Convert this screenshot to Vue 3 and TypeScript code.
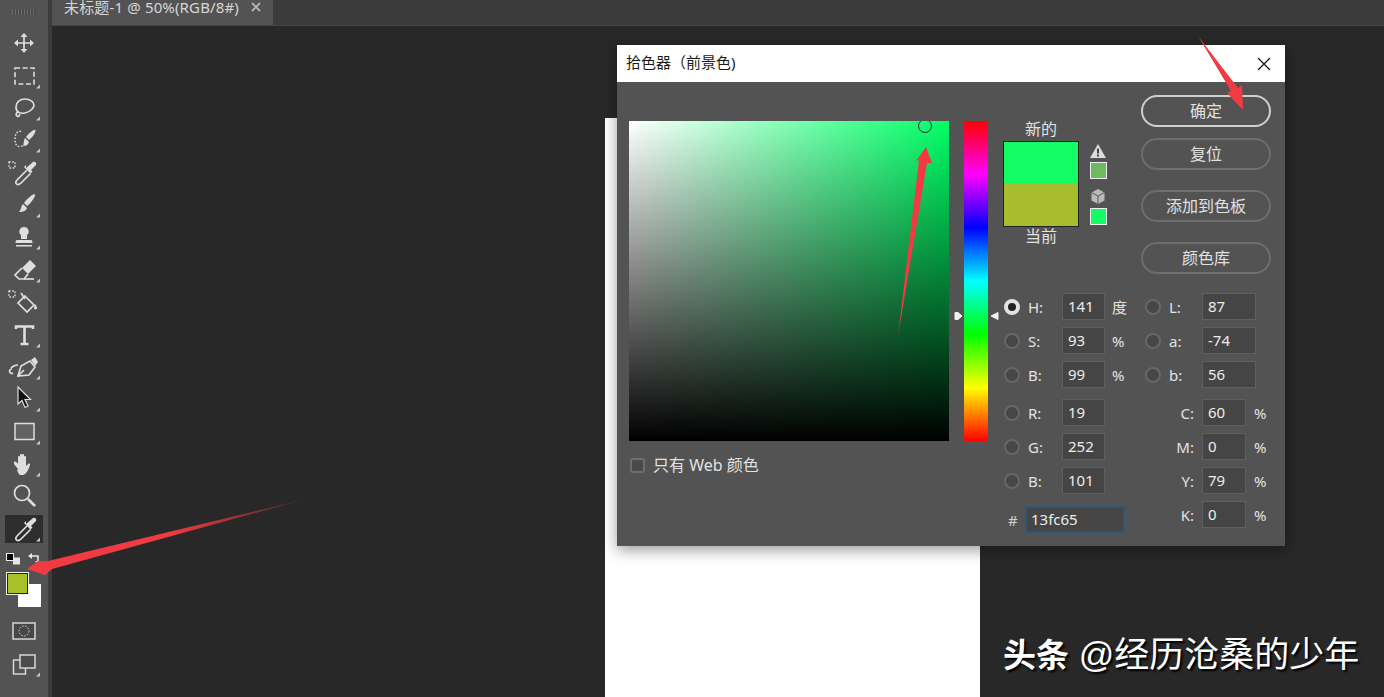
<template>
  <div class="app">
    <aside class="toolbar">
      <div class="grip"></div>
      <div
        v-for="tool in tools"
        :key="tool.name"
        class="tool"
        :class="{ 'tool--active': tool.active }"
      >
        <svg width="32" height="28" viewBox="0 0 32 28">
          <path
            v-for="(p, i) in tool.paths"
            :key="i"
            :d="p.d"
            :class="p.kind"
          />
          <path v-if="tool.more" d="M32 22.5V26.5H28z" class="more" />
        </svg>
      </div>

      <div class="color-tools">
        <svg class="defaults" width="34" height="14" viewBox="0 0 34 14">
          <rect x="8" y="5.5" width="7" height="7" fill="#e6e6e6" />
          <rect x="1.5" y="1.5" width="7" height="7" fill="#000" stroke="#eee" />
          <path d="M25 4h8v7" fill="none" stroke="#e6e6e6" stroke-width="1.6" />
          <path d="M27 1v6l-4-3zM30 9h6l-3 4z" fill="#e6e6e6" />
        </svg>
        <div class="swatches">
          <div class="swatch swatch--bg"></div>
          <div class="swatch swatch--fg"></div>
        </div>
      </div>

      <svg class="bottom-icon bottom-icon--mask" width="24" height="18" viewBox="0 0 24 18">
        <rect x="1" y="1" width="22" height="16" fill="#474747" stroke="#e0e0e0" stroke-width="1.4" />
        <circle cx="12" cy="9" r="5" fill="none" stroke="#ddd" stroke-dasharray="1.5 1.5" />
      </svg>
      <svg class="bottom-icon bottom-icon--screen" width="32" height="24" viewBox="0 0 32 24">
        <rect x="5.5" y="6" width="12" height="14" fill="none" stroke="#e0e0e0" stroke-width="1.4" />
        <rect x="12" y="1" width="15" height="13" fill="#4c4c4c" stroke="#e0e0e0" stroke-width="1.4" />
        <path d="M32 18.5V22.5H28z" class="more" />
      </svg>
    </aside>

    <main class="main">
      <div class="tabbar">
        <div class="tab">
          <span class="tab__title">未标题-1 @ 50%(RGB/8#)</span>
          <svg width="10" height="10" viewBox="0 0 10 10" class="tab__close">
            <path d="M1 1l8 8M9 1l-8 8" stroke="#b4b4b4" stroke-width="1.8" />
          </svg>
        </div>
      </div>

      <div class="canvas">
        <div class="doc"></div>

        <section class="dialog">
          <header class="dialog__title">
            <span class="dialog__name">拾色器（前景色)</span>
            <svg width="14" height="14" viewBox="0 0 14 14">
              <path d="M1 1l12 12M13 1L1 13" stroke="#111" stroke-width="1.2" />
            </svg>
          </header>

          <div class="dialog__body">
            <div class="picker-col">
              <div class="field">
                <span class="field__marker"></span>
              </div>
              <label class="web-only">
                <span class="web-only__box"></span>
                <span>只有 Web 颜色</span>
              </label>
            </div>

            <div class="hue-wrap">
              <div class="hue"></div>
              <svg class="hue-handle hue-handle--left" width="9" height="10" viewBox="0 0 9 10">
                <path d="M1 1.500h3L8 5 4 8.500H1z" fill="#f0f0f0" stroke="#f0f0f0" />
              </svg>
              <svg class="hue-handle hue-handle--right" width="9" height="10" viewBox="0 0 9 10">
                <path d="M8 1.500L1 5l7 3.500z" fill="#f0f0f0" stroke="#f0f0f0" />
              </svg>
            </div>

            <div class="side">
              <div class="side__top">
                <div class="preview">
                  <div class="preview__label">新的</div>
                  <div class="preview__row">
                    <div class="preview__box">
                      <div class="preview__new"></div>
                      <div class="preview__cur"></div>
                    </div>
                    <div class="gamut">
                      <svg width="18" height="16" viewBox="0 0 18 16">
                        <path d="M9 1l8 14H1z" fill="#dcdcdc" />
                        <path d="M8 5.500h2v5H8zM8 11.500h2v2H8z" fill="#444" />
                      </svg>
                      <div class="gamut__chip gamut__chip--warn"></div>
                      <svg class="gamut__cube" width="16" height="17" viewBox="0 0 16 17">
                        <path d="M8 1l6.500 3.500v8L8 16l-6.500-3.500v-8z" fill="#b9b9b9" />
                        <path d="M1.500 4.500L8 8l6.500-3.500M8 8v8" fill="none" stroke="#555" />
                      </svg>
                      <div class="gamut__chip gamut__chip--web"></div>
                    </div>
                  </div>
                  <div class="preview__label preview__label--cur">当前</div>
                </div>

                <div class="actions">
                  <button type="button" class="btn btn--primary">确定</button>
                  <button type="button" class="btn btn--reset">复位</button>
                  <button type="button" class="btn btn--swatch">添加到色板</button>
                  <button type="button" class="btn btn--library">颜色库</button>
                </div>
              </div>

              <div class="form">
                <div class="form__col">
                  <div
                    v-for="row in leftRows"
                    :key="row.id"
                    class="row"
                    :class="{ 'row--gap': row.id === 'R' }"
                  >
                    <span class="radio" :class="{ 'radio--on': row.on }"></span>
                    <span class="row__label">{{ row.label }}:</span>
                    <span class="num num--left">{{ row.value }}</span>
                    <span class="row__unit">{{ row.unit }}</span>
                  </div>
                  <div class="row row--hex">
                    <span class="row__hash">#</span>
                    <span class="num num--hex">13fc65</span>
                  </div>
                </div>

                <div class="form__col form__col--right">
                  <div v-for="row in labRows" :key="row.label" class="row">
                    <span class="radio radio--lab"></span>
                    <span class="row__label">{{ row.label }}:</span>
                    <span class="num num--lab">{{ row.value }}</span>
                  </div>
                  <div
                    v-for="row in cmykRows"
                    :key="row.label"
                    class="row"
                    :class="{ 'row--gap': row.label === 'C' }"
                  >
                    <span class="row__label row__label--cmyk">{{ row.label }}:</span>
                    <span class="num num--cmyk">{{ row.value }}</span>
                    <span class="row__unit row__unit--cmyk">%</span>
                  </div>
                </div>
              </div>
            </div>
          </div>
        </section>

        <div class="watermark"><b>头条</b> @经历沧桑的少年</div>
      </div>
    </main>

    <svg class="arrows" width="1384" height="697" viewBox="0 0 1384 697">
      <defs>
        <linearGradient id="tailA" gradientUnits="userSpaceOnUse" x1="310" y1="498" x2="170" y2="535">
          <stop offset="0" stop-color="#f23a42" stop-opacity="0.1" />
          <stop offset="1" stop-color="#f23a42" />
        </linearGradient>
      </defs>
      <path d="M310 498L48 561H38L27 569l18 6 7-6z" fill="url(#tailA)" />
      <path d="M1198 36l33 55-4 2 16 17-1-25-4 3z" fill="#f23a42" />
      <path d="M898 336l21-176-3 1 10-14 6 16h-5z" fill="#f23a42" />
    </svg>
  </div>
</template>

<script setup lang="ts">
interface IconPath {
  d: string
  kind: 'fill' | 'line' | 'thick' | 'dash' | 'dots' | 'black' | 'box'
}

interface Tool {
  name: string
  paths: IconPath[]
  more?: boolean
  active?: boolean
}

const dropper: IconPath[] = [
  { d: 'M18 9l7-6c2-1 4 1 3 3l-5 5 1.500 1.500-2 2L16 8l2-2z', kind: 'fill' },
  { d: 'M19 11l-9.500 9.500c-1.500 1.500-2 3.500-1 4.500s3 .5 4.500-1l9.500-9.500', kind: 'line' },
]

const checker: IconPath = { d: 'M1 3h6v6H1z', kind: 'dots' }

const tools: Tool[] = [
  {
    name: 'move',
    paths: [
      { d: 'M16 7v14M9 14h14', kind: 'line' },
      { d: 'M16 4l-3.500 4h7zM16 24l-3.500-4h7zM6 14l4-3.500v7zM26 14l-4-3.500v7z', kind: 'fill' },
    ],
  },
  {
    name: 'marquee',
    more: true,
    paths: [{ d: 'M7 6h19v16H7z', kind: 'dash' }],
  },
  {
    name: 'lasso',
    more: true,
    paths: [
      { d: 'M8 13c0-5 4-8 9-8s9 3 9 6-4 7-9 8c-4 .8-9 0-9-6z', kind: 'line' },
      { d: 'M10 18c-2 1-2.500 3-1 4s3 0 2.500-2', kind: 'line' },
    ],
  },
  {
    name: 'quick-select',
    more: true,
    paths: [
      { d: 'M13 5.500c-3-1-6 2-6 7s1 8 5 8c2 0 3-1 3.500-2', kind: 'dots' },
      { d: 'M27 3l.5 2c-1 4-4 7-6.500 9l-3-3c2-3 6-6.500 9.500-8z', kind: 'fill' },
      { d: 'M17 12l4 4c-1 3-3 4-6 4 1-2 .5-6 2-8z', kind: 'fill' },
    ],
  },
  {
    name: 'eyedropper-sample',
    paths: [checker, ...dropper],
  },
  {
    name: 'brush',
    more: true,
    paths: [
      { d: 'M26 3c1 0 1 1 1 2-2 4-5 8-8 10l-3-3c2-3 6-7 10-9z', kind: 'fill' },
      { d: 'M15 13l4 4c-1 3-4 4-8 4 2-2 2-6 4-8z', kind: 'fill' },
    ],
  },
  {
    name: 'stamp',
    more: true,
    paths: [
      { d: 'M16 4a4.500 4.500 0 0 1 3 8v4h-6v-4a4.500 4.500 0 0 1 3-8z', kind: 'fill' },
      { d: 'M9 17h14c1 0 1.500 1 1.500 3h-17c0-2 .5-3 1.500-3zM8 22h16v1.500H8z', kind: 'fill' },
    ],
  },
  {
    name: 'eraser',
    more: true,
    paths: [
      { d: 'M22 4l6 6-8 8-6-6z', kind: 'fill' },
      { d: 'M14 12l-7 7 4 4h5l4-5', kind: 'line' },
      { d: 'M16 23h10', kind: 'line' },
    ],
  },
  {
    name: 'bucket',
    paths: [
      checker,
      { d: 'M17 8l9 9-7 7-9-9z', kind: 'line' },
      { d: 'M13 5l4 6', kind: 'line' },
      { d: 'M27 16c1.500 2 3 4 1.500 5s-2.500 0-2.500-1z', kind: 'fill' },
    ],
  },
  {
    name: 'type',
    more: true,
    paths: [{ d: 'M8 8V5.500h17V8M16.500 6v17M12.500 23h8', kind: 'thick' }],
  },
  {
    name: 'pen',
    more: true,
    paths: [
      { d: 'M10 23l3-10 9-5 5 6-6 8z', kind: 'line' },
      { d: 'M23 7l4-3 3 5-3 4z', kind: 'fill' },
      { d: 'M10 23l6-6', kind: 'line' },
      { d: 'M3 15c2-2 4-3 7-3M4 16a2.200 2.200 0 1 0 1 4', kind: 'line' },
    ],
  },
  {
    name: 'path-select',
    more: true,
    paths: [{ d: 'M10 2v17l4-3.500 3 7 3-1.500-3-6.500h5.500z', kind: 'black' }],
  },
  {
    name: 'shape',
    more: true,
    paths: [{ d: 'M7 5.500h19v16H7z', kind: 'box' }],
  },
  {
    name: 'hand',
    more: true,
    paths: [
      {
        d: 'M10 19c-2-3-5-5-4-7 1-1 3 0 4 2V7c0-1.500 2-1.500 2 0v4-6c0-1.500 2-1.500 2 0v6-6c0-1.500 2-1.500 2 0v6-4c0-1.500 2-1.500 2 0v9l2-2c1-1 2.500 0 2 1-1 3-3 9-7 10h-3c-1 0-2-3-3-5z',
        kind: 'fill',
      },
    ],
  },
  {
    name: 'zoom',
    paths: [
      { d: 'M14 3.500a7.500 7.500 0 1 0 0 15 7.500 7.500 0 0 0 0-15z', kind: 'line' },
      { d: 'M20 17l7 7', kind: 'thick' },
    ],
  },
  {
    name: 'eyedropper',
    more: true,
    active: true,
    paths: dropper,
  },
]

const leftRows = [
  { id: 'H', label: 'H', value: '141', unit: '度', on: true },
  { id: 'S', label: 'S', value: '93', unit: '%' },
  { id: 'Br', label: 'B', value: '99', unit: '%' },
  { id: 'R', label: 'R', value: '19', unit: '' },
  { id: 'G', label: 'G', value: '252', unit: '' },
  { id: 'Bl', label: 'B', value: '101', unit: '' },
]

const labRows = [
  { label: 'L', value: '87' },
  { label: 'a', value: '-74' },
  { label: 'b', value: '56' },
]

const cmykRows = [
  { label: 'C', value: '60' },
  { label: 'M', value: '0' },
  { label: 'Y', value: '79' },
  { label: 'K', value: '0' },
]
</script>

<style>
html,
body {
  margin: 0;
  background: #282828;
  overflow: hidden;
}
</style>

<style scoped>
.app {
  position: relative;
  display: flex;
  width: 1384px;
  height: 697px;
  overflow: hidden;
  background: #282828;
  font-family: "Noto Sans", "Noto Sans CJK SC", sans-serif;
}

.toolbar {
  display: flex;
  flex-direction: column;
  align-items: center;
  box-sizing: border-box;
  width: 52px;
  flex: none;
  border-right: 4px solid #3c3c3c;
  background: #535353;
}

.grip {
  width: 24px;
  height: 6px;
  margin: 9px 0 12px;
  background: repeating-linear-gradient(to right, #6a6a6a 0 1px, #4a4a4a 1px 3px);
}

.tool {
  display: flex;
  align-items: center;
  justify-content: center;
  width: 38px;
  height: 28px;
  margin: 2.2px 0;
  flex: none;
}

.tool--active {
  background: #2d2d2d;
}

.fill {
  fill: #dedede;
}

.line {
  fill: none;
  stroke: #dedede;
  stroke-width: 1.7;
}

.thick {
  fill: none;
  stroke: #dedede;
  stroke-width: 2.6;
}

.dash {
  fill: none;
  stroke: #dedede;
  stroke-width: 1.6;
  stroke-dasharray: 5 2.6;
}

.dots {
  fill: none;
  stroke: #dedede;
  stroke-width: 1.4;
  stroke-dasharray: 1.6 1.6;
}

.black {
  fill: #111;
  stroke: #dedede;
  stroke-width: 1.2;
}

.box {
  fill: #626262;
  stroke: #dedede;
  stroke-width: 1.5;
}

.more {
  fill: #c8c8c8;
}

.color-tools {
  display: flex;
  flex-direction: column;
  width: 48px;
  margin-top: 7px;
}

.defaults {
  margin-left: 5px;
}

.swatches {
  position: relative;
  height: 40px;
  margin-top: 6px;
}

.swatch {
  position: absolute;
  box-sizing: border-box;
  width: 23px;
  height: 23px;
}

.swatch--fg {
  left: 6px;
  top: 0;
  background: #a8c127;
  border: 1px solid #f0f0f0;
  outline: 1px solid #222;
  outline-offset: -2px;
}

.swatch--bg {
  left: 18px;
  top: 12px;
  background: #fff;
}

.bottom-icon {
  flex: none;
}

.bottom-icon--mask {
  margin-top: 10px;
}

.bottom-icon--screen {
  margin-top: 14px;
}

.main {
  display: flex;
  flex-direction: column;
  flex: 1;
  min-width: 0;
}

.tabbar {
  height: 26px;
  flex: none;
  background: #3b3b3b;
  box-shadow: inset 0 -1px 0 #454545;
}

.tab {
  display: flex;
  align-items: flex-start;
  box-sizing: border-box;
  width: 221px;
  height: 25px;
  padding-left: 12px;
  overflow: hidden;
  background: #535353;
  color: #d6d6d6;
}

.tab__title {
  margin-top: -4px;
  font-size: 15px;
  line-height: 22px;
  letter-spacing: 0.15px;
  white-space: nowrap;
}

.tab__close {
  margin: 2px 0 0 12px;
}

.canvas {
  position: relative;
  flex: 1;
  background: #282828;
}

.doc {
  position: absolute;
  left: 553px;
  top: 92px;
  bottom: 0;
  width: 375px;
  background: #fff;
}

.dialog {
  position: absolute;
  left: 565px;
  top: 19px;
  display: flex;
  flex-direction: column;
  width: 668px;
  height: 501px;
  background: #535353;
  box-shadow: 0 4px 14px rgba(0, 0, 0, 0.4);
}

.dialog__title {
  display: flex;
  align-items: center;
  justify-content: space-between;
  box-sizing: border-box;
  height: 37px;
  flex: none;
  padding: 0 14px 0 9px;
  background: #fff;
  color: #1a1a1a;
  font-size: 15px;
}

.dialog__name {
  margin-top: -4px;
}

.dialog__body {
  display: flex;
  flex: 1;
  padding: 13px 14px 0 12px;
  color: #e2e2e2;
}

.picker-col {
  width: 320px;
  flex: none;
  padding-top: 26px;
}

.field {
  position: relative;
  width: 320px;
  height: 320px;
  overflow: hidden;
  background:
    linear-gradient(to top, #000, rgba(0, 0, 0, 0)),
    linear-gradient(to right, #fff, #00ff66);
}

.field__marker {
  position: absolute;
  left: 289px;
  top: -2px;
  box-sizing: border-box;
  width: 14px;
  height: 14px;
  border: 1px solid #123;
  border-radius: 50%;
}

.web-only {
  display: flex;
  align-items: center;
  gap: 8px;
  margin: 13px 0 0 1px;
  font-size: 16px;
  line-height: 22px;
}

.web-only__box {
  box-sizing: border-box;
  width: 15px;
  height: 15px;
  border: 2px solid #6e6e6e;
  border-radius: 3px;
  background: #4a4a4a;
}

.hue-wrap {
  position: relative;
  flex: none;
  width: 24px;
  height: 320px;
  margin: 26px 0 0 15px;
}

.hue {
  height: 100%;
  background: linear-gradient(
    to bottom,
    #ff0000,
    #ff00ff 16.67%,
    #0000ff 33.33%,
    #00ffff 50%,
    #00ff00 66.67%,
    #ffff00 83.33%,
    #ff0000
  );
}

.hue-handle {
  position: absolute;
  top: 190px;
}

.hue-handle--left {
  left: -10px;
}

.hue-handle--right {
  right: -11px;
}

.side {
  flex: none;
  width: 268px;
  margin-left: 15px;
}

.side__top {
  display: flex;
  justify-content: space-between;
  height: 198px;
}

.preview {
  width: 112px;
  padding-top: 23px;
}

.preview__label {
  width: 76px;
  font-size: 16px;
  line-height: 23px;
  text-align: center;
}

.preview__label--cur {
  line-height: 19px;
}

.preview__row {
  display: flex;
}

.preview__box {
  display: flex;
  flex-direction: column;
  box-sizing: border-box;
  width: 76px;
  height: 86px;
  border: 1px solid #222;
}

.preview__new {
  flex: 1;
  background: #13fc65;
}

.preview__cur {
  flex: 1;
  background: #a8bd2d;
}

.gamut {
  display: flex;
  flex-direction: column;
  align-items: center;
  width: 18px;
  margin-left: 10px;
  padding-top: 2px;
}

.gamut__chip {
  box-sizing: border-box;
  width: 17px;
  height: 17px;
  margin-top: 3px;
  border: 1px solid #f0f0f0;
}

.gamut__chip--warn {
  background: #6dbb5f;
}

.gamut__chip--web {
  background: #13fc65;
}

.gamut__cube {
  margin-top: 9px;
}

.actions {
  display: flex;
  flex-direction: column;
  width: 130px;
}

.btn {
  box-sizing: border-box;
  width: 130px;
  height: 32px;
  padding: 0 0 2px;
  border: 2px solid #6e6e6e;
  border-radius: 16px;
  background: #535353;
  color: #e2e2e2;
  font-family: "Noto Sans CJK SC", sans-serif;
  font-size: 16px;
  line-height: 1;
}

.btn--primary {
  border-color: #d0d0d0;
}

.btn--reset {
  margin-top: 11px;
}

.btn--swatch {
  margin-top: 20px;
}

.btn--library {
  margin-top: 20px;
}

.form {
  display: flex;
}

.form__col {
  width: 140px;
  flex: none;
}

.form__col--right {
  width: 128px;
}

.row {
  display: flex;
  align-items: center;
  height: 27px;
  margin-bottom: 7px;
  font-size: 15px;
}

.row--gap {
  margin-top: 11px;
}

.row--hex {
  margin-top: 12px;
  margin-bottom: 0;
}

.radio {
  box-sizing: border-box;
  flex: none;
  width: 16px;
  height: 16px;
  margin-left: 1px;
  border: 2px solid #676767;
  border-radius: 50%;
  background: #474747;
}

.radio--on {
  border: 4px solid #e2e2e2;
  background: #222;
}

.radio--lab {
  margin-left: 2px;
}

.row__label {
  width: 34px;
  margin-left: 8px;
  flex: none;
}

.form__col--right .row__label {
  width: 33px;
  margin-left: 8px;
}

.form__col--right .row__label--cmyk {
  box-sizing: border-box;
  width: 59px;
  margin-left: 0;
  padding-right: 8px;
  text-align: right;
}

.row__unit {
  margin-left: 7px;
}

.row__unit--cmyk {
  margin-left: 8px;
}

.row__hash {
  box-sizing: border-box;
  width: 22px;
  padding-left: 5px;
  color: #d0d0d0;
}

.num {
  box-sizing: border-box;
  flex: none;
  height: 27px;
  padding-left: 5px;
  border: 1px solid #5f5f5f;
  background: #454545;
  color: #ececec;
  font-size: 15px;
  line-height: 25px;
}

.num--left {
  width: 43px;
}

.num--lab {
  width: 54px;
}

.num--cmyk {
  width: 44px;
}

.num--hex {
  width: 100px;
  border: 2px solid #2f5578;
  line-height: 23px;
  padding-left: 4px;
}

.watermark {
  position: absolute;
  left: 951px;
  top: 604px;
  color: #fff;
  font-family: "Liberation Sans", "Noto Sans CJK SC", sans-serif;
  font-size: 35px;
  line-height: 50px;
  white-space: nowrap;
  text-shadow: 2px 2px 2px #000;
}

.watermark b {
  font-size: 33px;
  font-weight: 700;
}

.arrows {
  position: absolute;
  left: 0;
  top: 0;
  pointer-events: none;
}
</style>
